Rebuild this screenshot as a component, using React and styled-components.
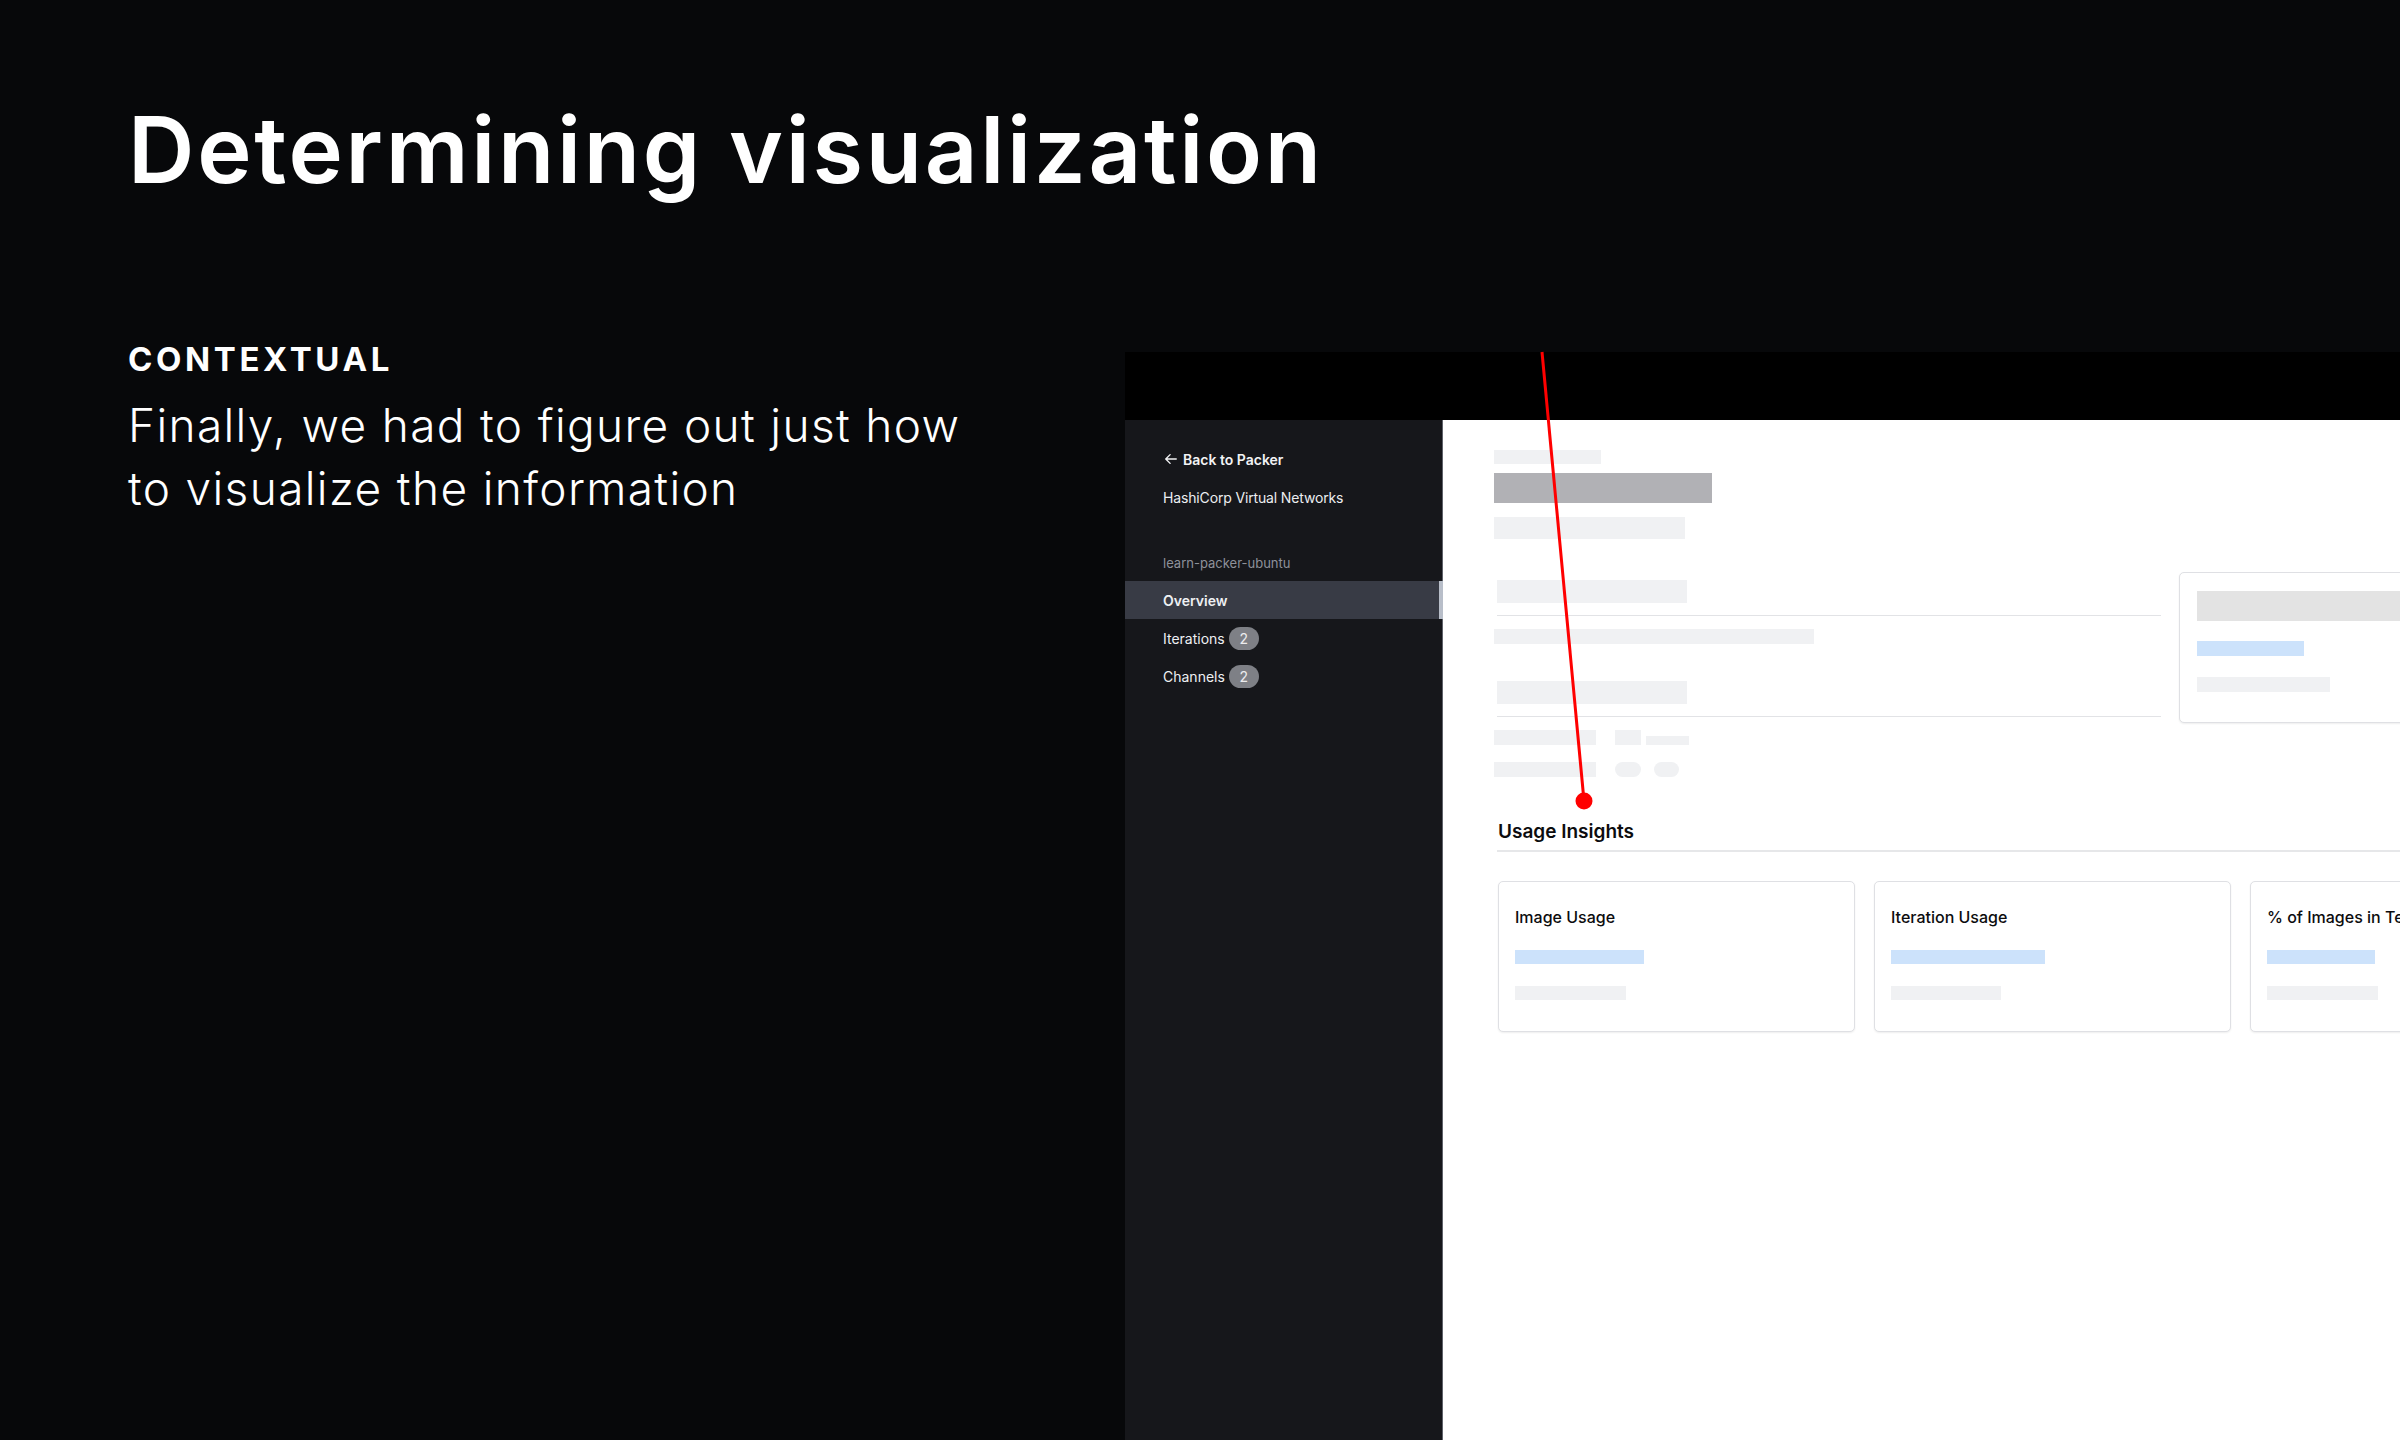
import React from "react";
import styled, { createGlobalStyle } from "styled-components";

const Global = createGlobalStyle`
  html, body { margin: 0; padding: 0; background: #07080a; }
  #root { width: 2400px; height: 1440px; }
  * { box-sizing: border-box; }
`;

const Page = styled.div`
  position: relative;
  width: 2400px;
  height: 1440px;
  overflow: hidden;
  background: #07080a;
  padding-left: 128px;
  font-family: Inter, "Liberation Sans", sans-serif;
  color: #fff;
`;

const Title = styled.h1`
  margin: 0;
  padding-top: 104px;
  font-size: 92px;
  line-height: 92px;
  font-weight: 600;
  letter-spacing: 2.7px;
  color: #fff;
`;

const Row = styled.div`
  display: flex;
  margin-top: 143px;
  height: ${1440 - 339}px;
`;

const TextCol = styled.div`
  width: 997px;
  flex: none;
`;

const Eyebrow = styled.div`
  font-size: 33px;
  line-height: 40px;
  font-weight: 700;
  letter-spacing: 3.6px;
`;

const Body = styled.p`
  margin: 15px 0 0;
  font-size: 46px;
  line-height: 63px;
  font-weight: 300;
  letter-spacing: 1.35px;
  max-width: 900px;
`;

const Panel = styled.div`
  margin-top: 13px;
  flex: 1;
  display: flex;
  flex-direction: column;
  overflow: hidden;
  background: #000;
`;

const TopBar = styled.div`
  height: 68px;
  flex: none;
  background: #000;
`;

const Shell = styled.div`
  flex: 1;
  display: flex;
`;

const Sidebar = styled.nav`
  width: 318px;
  flex: none;
  background: #16171b;
  border-right: 1px solid #5f626a;
  padding-top: 29px;
  font-size: 14px;
`;

const SideLink = styled.div`
  display: flex;
  align-items: center;
  gap: 5px;
  padding-left: 39px;
  height: 20px;
  font-weight: 600;
  color: #f2f3f5;
`;

const SideTitle = styled.div`
  margin-top: 19px;
  padding-left: 38px;
  height: 20px;
  line-height: 20px;
  letter-spacing: -0.15px;
  color: #eceef1;
`;

const SideLabel = styled.div`
  margin-top: 46px;
  padding-left: 38px;
  font-size: 13px;
  line-height: 18px;
  color: #8e919a;
`;

const NavList = styled.div`
  margin-top: 9px;
  display: flex;
  flex-direction: column;
`;

const NavItem = styled.div`
  position: relative;
  height: 38px;
  display: flex;
  align-items: center;
  gap: 4px;
  padding-left: 38px;
  font-weight: ${(p) => (p.$active ? 600 : 400)};
  color: #eef0f3;
  background: ${(p) => (p.$active ? "#383b45" : "transparent")};
  &::after {
    content: "";
    display: ${(p) => (p.$active ? "block" : "none")};
    position: absolute;
    right: -1px;
    top: 0;
    bottom: 0;
    width: 4px;
    background: #b8bec9;
  }
`;

const Badge = styled.span`
  display: inline-flex;
  align-items: center;
  justify-content: center;
  width: 30px;
  height: 23px;
  border-radius: 12px;
  background: #7e8086;
  color: #ececee;
  font-size: 14px;
`;

const Main = styled.main`
  flex: 1;
  background: #fff;
  padding: 30px 0 0 51px;
  display: flex;
  flex-direction: column;
  min-width: 0;
`;

const Skel = styled.div`
  flex: none;
  width: ${(p) => p.$w}px;
  height: ${(p) => p.$h}px;
  margin-top: ${(p) => p.$mt || 0}px;
  margin-left: ${(p) => p.$ml || 0}px;
  border-radius: ${(p) => p.$r || 0}px;
  background: ${(p) =>
    p.$tone === "dark"
      ? "#b1b1b5"
      : p.$tone === "blue"
      ? "#cce2fb"
      : p.$tone === "mid"
      ? "#e3e3e3"
      : "#f0f1f3"};
`;

const Overview = styled.section`
  margin-top: 33px;
  display: flex;
  gap: 18px;
  align-items: flex-start;
`;

const LeftCol = styled.div`
  width: 667px;
  flex: none;
  padding-top: 8px;
  display: flex;
  flex-direction: column;
`;

const Rule = styled.div`
  height: 1px;
  background: #e2e3e6;
  margin-top: ${(p) => p.$mt || 0}px;
  margin-left: ${(p) => p.$ml || 0}px;
`;

const SkelRow = styled.div`
  display: flex;
  align-items: flex-end;
  margin-top: ${(p) => p.$mt || 0}px;
`;

const Card = styled.div`
  flex: none;
  width: ${(p) => p.$w || 357}px;
  height: 151px;
  border: 1px solid #dfe0e4;
  border-radius: 5px;
  box-shadow: 0 1px 2px rgba(0, 0, 0, 0.07);
  background: #fff;
  padding: ${(p) => p.$pt || 25}px 0 0 ${(p) => p.$pl || 16}px;
  display: flex;
  flex-direction: column;
`;

const SectionTitle = styled.h2`
  margin: 44px 0 0 4px;
  font-size: 19px;
  line-height: 22px;
  font-weight: 600;
  color: #0c0c0e;
`;

const SectionRule = styled.div`
  margin-top: 7px;
  margin-left: 3px;
  height: 2px;
  background: #e6e7e9;
`;

const Cards = styled.div`
  margin-top: 29px;
  margin-left: 4px;
  display: flex;
  gap: 19px;
`;

const CardTitle = styled.div`
  font-size: 16px;
  line-height: 20px;
  font-weight: 500;
  color: #0c0c0e;
  white-space: nowrap;
`;

const Overlay = styled.svg`
  position: absolute;
  left: 0;
  top: 0;
  pointer-events: none;
`;

const ArrowLeft = () => (
  <svg width="14" height="14" viewBox="0 0 16 16" fill="none">
    <path d="M14 8H2.5M7 3L2 8l5 5" stroke="#f2f3f5" strokeWidth="1.6" strokeLinecap="round" strokeLinejoin="round" />
  </svg>
);

const usage = [
  { title: "Image Usage", blue: 129, gray: 111 },
  { title: "Iteration Usage", blue: 154, gray: 110 },
  { title: "% of Images in Templates", blue: 108, gray: 111 },
];

export default function App() {
  return (
    <Page>
      <Global />
      <Title>Determining visualization</Title>
      <Row>
        <TextCol>
          <Eyebrow>CONTEXTUAL</Eyebrow>
          <Body>
            Finally, we had to figure out just how
            <br />
            to visualize the information
          </Body>
        </TextCol>
        <Panel>
          <TopBar />
          <Shell>
            <Sidebar>
              <SideLink>
                <ArrowLeft />
                Back to Packer
              </SideLink>
              <SideTitle>HashiCorp Virtual Networks</SideTitle>
              <SideLabel>learn-packer-ubuntu</SideLabel>
              <NavList>
                <NavItem $active>Overview</NavItem>
                <NavItem>
                  Iterations <Badge>2</Badge>
                </NavItem>
                <NavItem>
                  Channels <Badge>2</Badge>
                </NavItem>
              </NavList>
            </Sidebar>
            <Main>
              <Skel $w={107} $h={14} />
              <Skel $w={218} $h={30} $mt={9} $tone="dark" />
              <Skel $w={191} $h={22} $mt={14} />
              <Overview>
                <LeftCol>
                  <Skel $w={190} $h={23} $ml={3} />
                  <Rule $mt={12} $ml={3} />
                  <Skel $w={320} $h={15} $mt={13} />
                  <Skel $w={190} $h={23} $mt={37} $ml={3} />
                  <Rule $mt={12} $ml={3} />
                  <SkelRow $mt={13}>
                    <Skel $w={102} $h={15} />
                    <Skel $w={26} $h={15} $ml={19} />
                    <Skel $w={43} $h={9} $ml={5} />
                  </SkelRow>
                  <SkelRow $mt={17}>
                    <Skel $w={102} $h={15} />
                    <Skel $w={26} $h={15} $ml={19} $r={8} />
                    <Skel $w={25} $h={15} $ml={13} $r={8} />
                  </SkelRow>
                </LeftCol>
                <Card $w={320} $pt={18} $pl={17}>
                  <Skel $w={300} $h={30} $tone="mid" />
                  <Skel $w={107} $h={15} $mt={20} $tone="blue" />
                  <Skel $w={133} $h={15} $mt={21} />
                </Card>
              </Overview>
              <SectionTitle>Usage Insights</SectionTitle>
              <SectionRule />
              <Cards>
                {usage.map((u) => (
                  <Card key={u.title}>
                    <CardTitle>{u.title}</CardTitle>
                    <Skel $w={u.blue} $h={14} $mt={23} $tone="blue" />
                    <Skel $w={u.gray} $h={14} $mt={22} />
                  </Card>
                ))}
              </Cards>
            </Main>
          </Shell>
        </Panel>
      </Row>
      <Overlay width="2400" height="1440" viewBox="0 0 2400 1440">
        <line x1="1542" y1="352" x2="1584" y2="801" stroke="#ff0000" strokeWidth="3" />
        <circle cx="1584" cy="801" r="8.5" fill="#ff0000" />
      </Overlay>
    </Page>
  );
}
